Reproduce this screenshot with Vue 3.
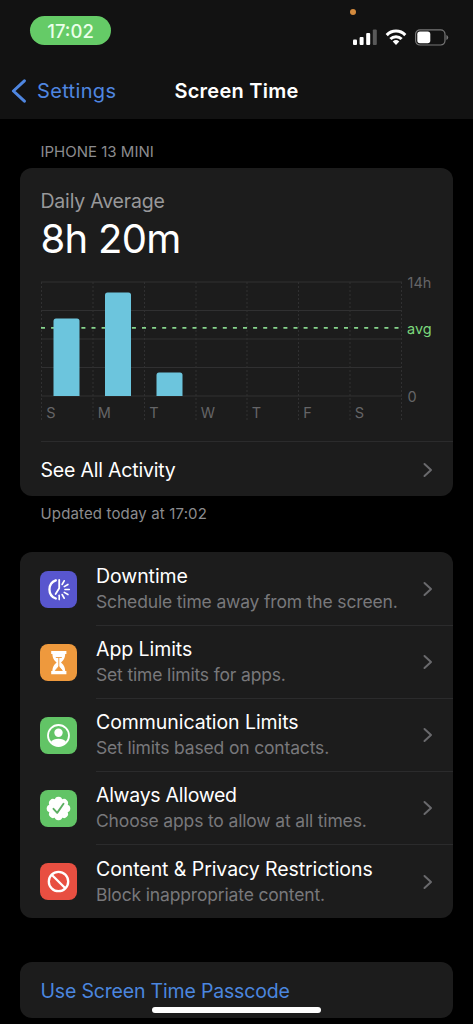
<script setup>
const days = ['S', 'M', 'T', 'W', 'T', 'F', 'S']
const bars = [
  { x: 12.5, top: 42.5 },
  { x: 64, top: 16.5 },
  { x: 115.5, top: 96.5 },
]
const columns = [0.5, 52, 103.5, 155, 206, 257.5, 309, 360.5]
const gridRows = [6, 34.5, 63, 91.5, 120]
const features = [
  { id: 'downtime', title: 'Downtime', text: 'Schedule time away from the screen.' },
  { id: 'limits', title: 'App Limits', text: 'Set time limits for apps.' },
  { id: 'contacts', title: 'Communication Limits', text: 'Set limits based on contacts.' },
  { id: 'allowed', title: 'Always Allowed', text: 'Choose apps to allow at all times.' },
  { id: 'content', title: 'Content & Privacy Restrictions', text: 'Block inappropriate content.' },
]
const rays = [-60, -30, 0, 30, 60, 90]
const scallops = [0, 45, 90, 135, 180, 225, 270, 315]
</script>

<template>
  <div class="screen">
    <header class="top">
      <div class="status">
        <span class="clock">17:02</span>
        <i class="mic-dot"></i>
        <svg class="indicators" width="98" height="20" viewBox="0 0 98 20">
          <g fill="#fff">
            <rect x="1" y="11.5" width="4" height="5.5" rx="1" />
            <rect x="7.6" y="9" width="4" height="8" rx="1" />
            <rect x="14.2" y="5" width="4" height="12" rx="1" />
            <rect x="20.8" y="1.5" width="4" height="15.5" rx="1" opacity=".3" />
          </g>
          <g fill="none" stroke="#fff" stroke-width="3">
            <path d="M34.7 7.1a12.8 12.8 0 0 1 18.6 0" />
            <path d="M38.4 11a7.8 7.8 0 0 1 11.2 0" />
          </g>
          <path d="M40.7 13.5a5 5 0 0 1 6.6 0L44 17z" fill="#fff" />
          <rect x="63.6" y="1.8" width="29.4" height="15.2" rx="4.4" fill="none" stroke="#777" stroke-width="1.2" />
          <rect x="65.3" y="3.6" width="13" height="11.6" rx="2.6" fill="#fff" />
          <path d="M94.4 7v5q1.8-.8 1.8-2.5T94.4 7z" fill="#777" />
        </svg>
      </div>
      <nav class="nav">
        <a class="back">
          <svg width="16" height="24" viewBox="0 0 16 24"><path d="M13.4 1.8 2.400 12l11 10.200" /></svg>
          <span>Settings</span>
        </a>
        <h1>Screen Time</h1>
      </nav>
    </header>

    <main>
      <p class="device">IPHONE 13 MINI</p>
      <section class="card usage">
        <p class="average">Daily Average</p>
        <p class="total">8h 20m</p>
        <svg class="chart" width="412" height="150" viewBox="0 0 412 150">
          <g class="grid">
            <line v-for="y in gridRows" :key="y" x1="0" x2="361" :y1="y" :y2="y" />
            <line v-for="x in columns" :key="x" :x1="x" :x2="x" y1="6" y2="146" stroke-dasharray="2 2" />
          </g>
          <line class="avg-line" x1="0" x2="360" y1="51.8" y2="51.8" />
          <path v-for="b in bars" :key="b.x" class="bar" :d="`M${b.x} 120V${b.top + 2.5}q0-2.5 2.5-2.5h21q2.5 0 2.5 2.5V120z`" />
          <text v-for="(d, i) in days" :key="i" :x="columns[i] + 4.8" y="142">{{ d }}</text>
          <text x="366.5" y="11.8">14h</text>
          <text class="avg" x="366" y="57.5">avg</text>
          <text x="366.5" y="125.5">0</text>
        </svg>
        <a class="activity">
          <span>See All Activity</span>
          <svg class="chevron" width="10" height="16" viewBox="0 0 10 16"><path d="m1.5 2 6.5 6-6.5 6" /></svg>
        </a>
      </section>
      <p class="updated">Updated today at 17:02</p>

      <section class="card features">
        <a v-for="f in features" :key="f.id" class="feature">
          <span class="icon" :class="f.id">
            <svg width="37" height="37" viewBox="0 0 37 37">
              <g v-if="f.id === 'downtime'" fill="none" stroke="#fff" stroke-width="2.3" stroke-linecap="round">
                <path d="M15.8 9.3a9.7 9.7 0 0 0 0 18.2" />
                <path d="M19.2 8.800v8.500L15.600 23" stroke-width="1.800" stroke-linejoin="round" />
                <path v-for="r in rays" :key="r" d="M25 18.500h4.300" :transform="`rotate(${r} 19.200 18.500)`" stroke-width="1.600" />
              </g>
              <g v-else-if="f.id === 'limits'">
                <path d="M11.2 7h15.2v3.100h-1.200c-.2 4.700-2.100 6.700-4.200 8.500 2.100 1.800 4 3.800 4.200 8.500h1.200v3.200H11.200v-3.200h1.200c.2-4.700 2.100-6.700 4.200-8.500-2.100-1.800-4-3.800-4.200-8.500h-1.200z" fill="#fff" />
                <path d="M15.800 13.500h6M18.800 13.500v10M18.800 22.500l-3.500 4h7z" fill="#ee993d" stroke="#ee993d" stroke-width=".9" />
              </g>
              <g v-else-if="f.id === 'contacts'">
                <circle cx="18.500" cy="18.500" r="10.500" fill="none" stroke="#fff" stroke-width="1.800" />
                <circle cx="18.500" cy="15.800" r="4.200" fill="#fff" />
                <path d="M10.800 25q2.700-3.200 7.700-3.200t7.700 3.200q-3.200 4-7.700 4t-7.700-4z" fill="#fff" />
              </g>
              <g v-else-if="f.id === 'allowed'">
                <g fill="#fff">
                  <circle cx="18.500" cy="18.500" r="10" />
                  <circle v-for="s in scallops" :key="s" cx="26.500" cy="18.500" r="3.800" :transform="`rotate(${s} 18.500 18.500)`" />
                </g>
                <path d="m13.500 18.800 3.700 4.100 6.300-9.200" fill="none" stroke="#5cae63" stroke-width="1.900" stroke-linecap="round" stroke-linejoin="round" />
              </g>
              <g v-else fill="none" stroke="#fff" stroke-width="2.300">
                <circle cx="18.500" cy="18.500" r="9.700" />
                <path d="m11.700 11.700 13.600 13.600" />
              </g>
            </svg>
          </span>
          <span class="body">
            <span class="words">
              <b :class="`${f.id}-title`">{{ f.title }}</b>
              <small>{{ f.text }}</small>
            </span>
            <svg class="chevron" width="10" height="16" viewBox="0 0 10 16"><path d="m1.5 2 6.5 6-6.5 6" /></svg>
          </span>
        </a>
      </section>

      <section class="card passcode"><a>Use Screen Time Passcode</a></section>
    </main>
    <i class="home"></i>
  </div>
</template>

<style>
body {
  background: #000;
}
</style>

<style scoped>
.screen {
  position: relative;
  box-sizing: border-box;
  width: 473px;
  height: 1024px;
  overflow: hidden;
  background: #000;
  color: #fff;
  font-family: Inter, "Liberation Sans", sans-serif;
  font-size: 19.5px;
}
p, h1 { margin: 0; font-weight: 400; }
.top { height: 119px; background: #121212; }
.status {
  position: relative;
  display: flex;
  justify-content: space-between;
  align-items: flex-start;
  height: 62px;
  padding: 16px 23px 0 30px;
  box-sizing: border-box;
}
.clock {
  width: 81px;
  height: 29px;
  border-radius: 15px;
  background: #65cb67;
  color: #eaffea;
  font-size: 18.5px;
  font-weight: 500;
  line-height: 30px;
  text-align: center;
}
.mic-dot {
  position: absolute;
  left: 350px;
  top: 9px;
  width: 6px;
  height: 6px;
  border-radius: 50%;
  background: #d38a3d;
}
.indicators { margin-top: 12px; }
.nav {
  display: grid;
  grid-template-columns: 1fr auto 1fr;
  align-items: center;
  height: 58px;
}
.back { display: flex; align-items: center; gap: 10px; padding-left: 11px; color: #4f86e0; font-size: 20px; letter-spacing: 0.35px; }
.back path { fill: none; stroke: #4f86e0; stroke-width: 3; stroke-linecap: round; stroke-linejoin: round; }
h1 { font-size: 20px; font-weight: 600; letter-spacing: 0.25px; }
main { padding: 0 20px; }
.device { height: 49px; padding: 23px 0 0 20.5px; box-sizing: border-box; font-size: 15px; line-height: 20px; color: #8c8c8f; }
.card { background: #1c1c1c; border-radius: 12px; }
.usage { height: 328px; padding-left: 20.5px; display: flex; flex-direction: column; }
.average { padding-top: 20px; height: 26px; line-height: 26px; color: #98989a; letter-spacing: -0.2px; }
.total { height: 50px; line-height: 50px; font-size: 40px; letter-spacing: -0.7px; }
.chart { display: block; margin-top: 12px; flex: none; overflow: visible; }
.grid line { stroke: #303031; stroke-width: 1; }
.chart text { fill: #656567; font-size: 14.5px; }
.chart .avg { fill: #7bd77b; }
.avg-line { stroke: #86d48c; stroke-width: 1.8; stroke-dasharray: 4 6.1; }
.bar { fill: #6cc5dd; }
.activity {
  display: flex;
  flex: 1;
  align-items: center;
  justify-content: space-between;
  margin-top: 15px;
  padding: 2px 20px 0 0;
  border-top: 1px solid #2b2b2c;
  letter-spacing: -0.2px;
}
.chevron { flex: none; }
.chevron path { fill: none; stroke: #69696c; stroke-width: 2; stroke-linecap: round; stroke-linejoin: round; }
.updated { height: 56px; padding: 8px 0 0 20.5px; box-sizing: border-box; font-size: 15px; line-height: 20px; color: #8c8c8f; letter-spacing: 0.15px; }
.features { height: 366px; padding-top: 0.6px; box-sizing: border-box; }
.feature { display: flex; align-items: center; height: 73.1px; padding-left: 20px; }
.icon { flex: none; width: 37px; height: 37px; border-radius: 8px; }
.icon svg { display: block; }
.downtime { background: #5856ce; }
.limits { background: #ee993d; }
.contacts, .allowed { background: #62c466; }
.content { background: #e84f41; }
.body {
  display: flex;
  flex: 1;
  align-items: center;
  justify-content: space-between;
  height: 100%;
  margin-left: 19px;
  padding: 1px 20px 0 0;
  box-sizing: border-box;
  border-bottom: 1px solid #2b2b2c;
}
.feature:last-child .body { border-bottom-color: transparent; }
.words { display: flex; flex-direction: column; white-space: nowrap; }
.words b { font-weight: 400; line-height: 26px; letter-spacing: -0.07px; }
.words .allowed-title { letter-spacing: -0.28px; }
.words small { font-size: 17.5px; line-height: 26px; color: #78787b; letter-spacing: -0.16px; }
.passcode { height: 56px; margin-top: 44px; padding-left: 20.5px; color: #4b86df; line-height: 58px; letter-spacing: -0.18px; }
.home { position: absolute; left: 152px; top: 1007px; width: 169px; height: 6px; border-radius: 3px; background: #fff; }
</style>
